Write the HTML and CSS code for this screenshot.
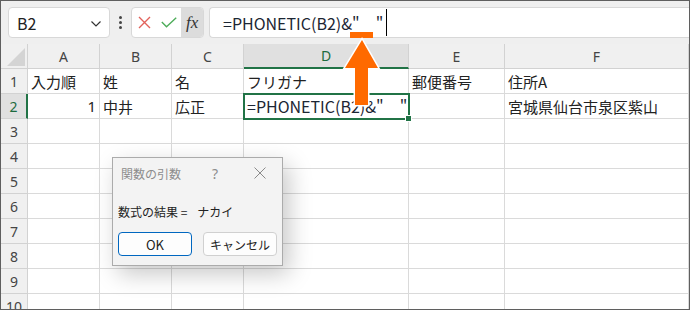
FILE: index.html
```html
<!DOCTYPE html>
<html lang="ja">
<head>
    <meta charset="UTF-8">
    <title>PHONETIC</title>
    <link rel="stylesheet" href="styles.css">
</head>
<body>
    <div class="excel">
        <div class="toolbar">
            <div class="namebox">
                <span>B2</span>
                <svg class="chevron" width="10" height="6" viewBox="0 0 10 6"><polyline points="0.5,0.5 5,5 9.5,0.5" fill="none" stroke="#333" stroke-width="1.2"/></svg>
            </div>
            <div class="more"><i></i><i></i><i></i></div>
            <div class="fbtns">
                <span class="fbtn">
                    <svg width="13" height="13" viewBox="0 0 13 13"><path d="M1 1 L12 12 M12 1 L1 12" stroke="#e2625b" stroke-width="1.4"/></svg>
                </span>
                <span class="fbtn">
                    <svg width="16" height="11" viewBox="0 0 16 11"><polyline points="0.8,5 5.5,9.8 15.2,0.8" fill="none" stroke="#4fad5b" stroke-width="1.4"/></svg>
                </span>
                <span class="fbtn fx"><i>f</i><i>x</i></span>
            </div>
            <div class="formula">=PHONETIC(B2)&amp;"　"<span class="caret"></span></div>
        </div>

        <div class="sheet">
            <div class="c h corner">
                <svg width="18" height="18" viewBox="0 0 18 18"><polygon points="18,0 18,18 0,18" fill="#d4d4d4"/></svg>
            </div>
            <div class="c h">A</div>
            <div class="c h">B</div>
            <div class="c h">C</div>
            <div class="c h sel-col">D</div>
            <div class="c h">E</div>
            <div class="c h">F</div>

            <div class="c r">1</div>
            <div class="c">入力順</div>
            <div class="c">姓</div>
            <div class="c">名</div>
            <div class="c">フリガナ</div>
            <div class="c">郵便番号</div>
            <div class="c">住所A</div>

            <div class="c r sel-row">2</div>
            <div class="c num">1</div>
            <div class="c">中井</div>
            <div class="c">広正</div>
            <div class="c active">=PHONETIC(B2)&amp;"　"</div>
            <div class="c"></div>
            <div class="c">宮城県仙台市泉区紫山</div>

            <div class="c r">3</div><div class="c"></div><div class="c"></div><div class="c"></div><div class="c"></div><div class="c"></div><div class="c"></div>
            <div class="c r">4</div><div class="c"></div><div class="c"></div><div class="c"></div><div class="c"></div><div class="c"></div><div class="c"></div>
            <div class="c r">5</div><div class="c"></div><div class="c"></div><div class="c"></div><div class="c"></div><div class="c"></div><div class="c"></div>
            <div class="c r">6</div><div class="c"></div><div class="c"></div><div class="c"></div><div class="c"></div><div class="c"></div><div class="c"></div>
            <div class="c r">7</div><div class="c"></div><div class="c"></div><div class="c"></div><div class="c"></div><div class="c"></div><div class="c"></div>
            <div class="c r">8</div><div class="c"></div><div class="c"></div><div class="c"></div><div class="c"></div><div class="c"></div><div class="c"></div>
            <div class="c r">9</div><div class="c"></div><div class="c"></div><div class="c"></div><div class="c"></div><div class="c"></div><div class="c"></div>
            <div class="c r last">10</div><div class="c"></div><div class="c"></div><div class="c"></div><div class="c"></div><div class="c"></div><div class="c"></div>
        </div>

        <div class="dialog">
            <div class="dialog-title">
                <span class="title">関数の引数</span>
                <span class="help">?</span>
                <span class="close">
                    <svg width="12" height="12" viewBox="0 0 12 12"><path d="M0.5 0.5 L11.5 11.5 M11.5 0.5 L0.5 11.5" stroke="#8a8a8a" stroke-width="1"/></svg>
                </span>
            </div>
            <div class="dialog-body"><span>数式の結果 =</span><span class="result">ナカイ</span></div>
            <div class="dialog-buttons">
                <button class="btn primary">OK</button>
                <button class="btn">キャンセル</button>
            </div>
        </div>

        <!-- 強調用の矢印 -->
        <svg class="arrow" width="50" height="85" viewBox="0 0 50 85">
            <rect x="10" y="4" width="23" height="6" fill="#ff6a00"/>
            <polygon points="22,12 5,40 15,40 15,77 28,77 28,40 38,40" fill="#ff6a00" stroke="#fff" stroke-width="3" paint-order="stroke" stroke-linejoin="miter"/>
        </svg>
    </div>
</body>
</html>
```

FILE: styles.css
```css
body {
    margin: 0;
    padding: 0;
    font-family: "Noto Sans CJK JP", "Noto Sans", sans-serif;
    color: #222;
}

.excel {
    position: relative;
    width: 690px;
    height: 310px;
    box-sizing: border-box;
    border: 1px solid #5f5f5f;
    background: #efefef;
    overflow: hidden;
}

/* 数式バー */
.toolbar {
    display: flex;
    align-items: flex-start;
    height: 37px;
    box-sizing: border-box;
    padding: 6px 0 0 7px;
}

.namebox {
    width: 102px;
    height: 31px;
    box-sizing: border-box;
    border: 1px solid #d8d8d8;
    border-radius: 4px;
    background: #fff;
    display: flex;
    align-items: center;
    justify-content: space-between;
    padding: 0 8px 0 8px;
    font-size: 16px;
    color: #222;
}

.chevron {
    margin-top: 2px;
}

.more {
    width: 21px;
    height: 31px;
    display: flex;
    flex-direction: column;
    align-items: center;
    justify-content: center;
    gap: 2px;
}

.more i {
    width: 3px;
    height: 3px;
    border-radius: 50%;
    background: #444;
}

.fbtns {
    width: 73px;
    height: 31px;
    box-sizing: border-box;
    border: 1px solid #d8d8d8;
    border-radius: 4px;
    background: #fff;
    display: flex;
    overflow: hidden;
}

.fbtn {
    width: 25px;
    display: flex;
    align-items: center;
    justify-content: center;
}

.fbtn.fx {
    width: 22px;
    background: #dcdcdc;
    font-family: "Liberation Serif", serif;
    font-size: 17px;
    color: #333;
}

.formula {
    flex: 1;
    margin-left: 5px;
    height: 31px;
    box-sizing: border-box;
    border: 1px solid #d8d8d8;
    border-right: none;
    border-radius: 4px 0 0 4px;
    background: #fff;
    display: flex;
    align-items: center;
    padding-left: 13px;
    font-size: 16px;
    color: #1c2633;
    white-space: pre;
}

.caret {
    display: inline-block;
    width: 1px;
    height: 27px;
    margin-left: 3px;
    background: #000;
}

/* シート */
.sheet {
    margin-top: 6px;
    display: grid;
    grid-template-columns: 27px 72px 72px 72px 165px 96px 1fr;
    grid-auto-rows: 25px;
    background: #fff;
}

.c {
    box-sizing: border-box;
    border-right: 1px solid #dadada;
    border-bottom: 1px solid #dadada;
    display: flex;
    align-items: center;
    padding: 0 3px;
    font-size: 15px;
    white-space: nowrap;
    overflow: hidden;
}

.c.h,
.c.r {
    background: #f0f0f0;
    justify-content: center;
    padding: 0;
    font-family: "Noto Sans", sans-serif;
    font-size: 14px;
    color: #444;
    border-color: #d2d2d2;
}

.c.r.last {
    align-items: flex-start;
    padding-top: 3px;
}

.c.corner {
    align-items: flex-end;
    justify-content: flex-end;
    padding: 0 2px 2px 0;
}

.c.sel-col {
    background: #e0e0e0;
    color: #1d6b3f;
    border-bottom: 2px solid #217346;
}

.c.sel-row {
    background: #e0e0e0;
    color: #1d6b3f;
    border-right: 2px solid #217346;
}

.c.num {
    justify-content: flex-end;
    font-family: "Noto Sans", sans-serif;
}

.c.active {
    position: relative;
    overflow: visible;
    outline: 2px solid #217346;
    outline-offset: -1px;
    padding-left: 3px;
    font-size: 16px;
    color: #1c2633;
}

.c.active::after {
    content: "";
    position: absolute;
    right: -4px;
    bottom: -4px;
    width: 5px;
    height: 5px;
    background: #217346;
    border: 1px solid #fff;
}

/* ダイアログ */
.dialog {
    position: absolute;
    left: 111px;
    top: 156px;
    width: 171px;
    height: 109px;
    box-sizing: border-box;
    border: 1px solid #ababab;
    background: #f3f3f3;
    box-shadow: 6px 8px 22px rgba(0, 0, 0, 0.22);
    font-size: 12px;
}

.dialog-title {
    height: 30px;
    display: flex;
    align-items: center;
    padding-left: 8px;
    color: #8c8c8c;
}

.dialog-title .title {
    flex: 1;
}

.dialog-title .help {
    width: 20px;
    text-align: center;
    margin-right: 13px;
    font-family: "Noto Sans", sans-serif;
    font-size: 14px;
}

.dialog-title .close {
    width: 44px;
    display: flex;
    justify-content: center;
}

.dialog-body {
    margin-top: 14px;
    height: 20px;
    line-height: 20px;
    padding-left: 5px;
    color: #222;
    display: flex;
}

.dialog-body .result {
    margin-left: 10px;
}

.dialog-buttons {
    margin-top: 10px;
    padding-left: 5px;
    display: flex;
    gap: 11px;
}

.btn {
    width: 74px;
    height: 24px;
    box-sizing: border-box;
    border: 1px solid #d0d0d0;
    border-radius: 4px;
    background: #fdfdfd;
    font-family: "Noto Sans CJK JP", "Noto Sans", sans-serif;
    font-size: 12px;
    color: #222;
    padding: 0;
}

.btn.primary {
    border-color: #0067c0;
    font-size: 13px;
}

.arrow {
    position: absolute;
    left: 339px;
    top: 27px;
}
```
